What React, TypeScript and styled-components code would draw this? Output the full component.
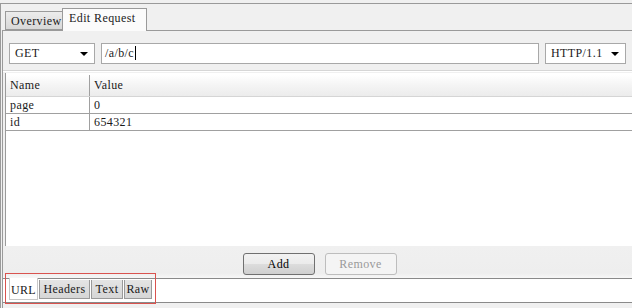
import React from 'react';
import styled, { createGlobalStyle } from 'styled-components';

const GlobalStyle = createGlobalStyle`
  html, body {
    margin: 0;
    padding: 0;
    background: #f0f0f0;
  }
  body {
    font-family: "Liberation Serif", "DejaVu Serif", serif;
    font-size: 12px;
    letter-spacing: 0.4px;
    color: #1a1a1a;
  }
`;

const Window = styled.div`
  position: relative;
  width: 632px;
  height: 308px;
  overflow: hidden;
  background: #f0f0f0;
  padding-top: 3px;
  box-sizing: border-box;
`;

const Frame = styled.div`
  border-top: 1px solid #9a9a9a;
  border-left: 1px solid #9a9a9a;
  height: 304px;
  display: flex;
  flex-direction: column;
  padding-left: 1px;
`;

const TabStrip = styled.div`
  display: flex;
  align-items: flex-end;
  height: 26px;
  padding-left: 3px;
`;

const TopTab = styled.div<{ $active?: boolean }>`
  display: flex;
  align-items: center;
  box-sizing: border-box;
  border: 1px solid #9a9a9a;
  border-bottom: ${({ $active }) => ($active ? 'none' : '1px solid #9a9a9a')};
  background: ${({ $active }) => ($active ? '#fbfbfb' : 'linear-gradient(#ececec, #d8d8d8)')};
  height: ${({ $active }) => ($active ? '23px' : '19px')};
  width: ${({ $active }) => ($active ? '85px' : '58px')};
  padding: ${({ $active }) => ($active ? '0 0 4px 6px' : '2px 0 0 5px')};
  margin-left: ${({ $active }) => ($active ? '-1px' : '0')};
  margin-bottom: ${({ $active }) => ($active ? '-1px' : '0')};
  position: relative;
  z-index: ${({ $active }) => ($active ? 1 : 0)};
`;

const Pane = styled.div`
  flex: 1;
  display: flex;
  flex-direction: column;
  border-top: 1px solid #9a9a9a;
  border-left: 1px solid #9a9a9a;
  background: #f0f0f0;
`;

const Toolbar = styled.div`
  display: flex;
  align-items: center;
  gap: 6px;
  padding: 11px 6px 0 6px;
  height: 22px;
`;

const Select = styled.div<{ $width: number }>`
  width: ${({ $width }) => $width}px;
  height: 21px;
  box-sizing: border-box;
  border: 1px solid #a8a8a8;
  background: #fff;
  display: flex;
  align-items: center;
  justify-content: space-between;
  padding: 0 6px 0 5px;
  flex-shrink: 0;
`;

const Arrow = styled.span`
  width: 0;
  height: 0;
  border-left: 4px solid transparent;
  border-right: 4px solid transparent;
  border-top: 4px solid #000;
  margin-top: 2px;
`;

const PathInput = styled.div`
  flex: 1;
  height: 21px;
  box-sizing: border-box;
  border: 1px solid #a8a8a8;
  background: #fff;
  display: flex;
  align-items: center;
  padding-left: 3px;
`;

const Caret = styled.span`
  display: inline-block;
  width: 1px;
  height: 14px;
  background: #000;
  margin-left: 1px;
`;

const Separator = styled.div`
  margin-top: 6px;
  border-top: 1px solid #d6d6d6;
  border-bottom: 1px solid #fff;
`;

const Grid = styled.div`
  flex: 1;
  margin: 1px 0 0 2px;
  border-left: 1px solid #9a9a9a;
  background: #fff;
  display: flex;
  flex-direction: column;
`;

const Row = styled.div<{ $header?: boolean }>`
  display: grid;
  grid-template-columns: 83px 1fr;
  height: ${({ $header }) => ($header ? '22px' : '17px')};
  box-sizing: border-box;
  border-bottom: 1px solid ${({ $header }) => ($header ? '#d5d5d5' : '#a0a0a0')};
  background: ${({ $header }) => ($header ? 'linear-gradient(#ffffff, #f4f4f4 50%, #ececec)' : '#fff')};
  margin-top: ${({ $header }) => ($header ? '2px' : '0')};
`;

const Cell = styled.div<{ $header?: boolean }>`
  display: flex;
  align-items: center;
  padding-left: 4px;
  & + & {
    border-left: 1px solid ${({ $header }) => ($header ? '#e2e2e2' : '#a0a0a0')};
  }
`;

const ButtonBar = styled.div`
  height: 32px;
  display: flex;
  justify-content: center;
  align-items: flex-start;
  gap: 10px;
  padding: 7px 0 0 4px;
  box-sizing: border-box;
  background: linear-gradient(#f0f0f0, #eeeeee 85%, #f7f7f7);
`;

const Button = styled.div<{ $disabled?: boolean }>`
  width: 72px;
  height: 22px;
  box-sizing: border-box;
  border: 1px solid ${({ $disabled }) => ($disabled ? '#bdbdbd' : '#707070')};
  border-radius: 3px;
  background: ${({ $disabled }) =>
    $disabled ? '#f4f4f4' : 'linear-gradient(#f2f2f2, #ebebeb 50%, #dddddd 51%, #cfcfcf)'};
  color: ${({ $disabled }) => ($disabled ? '#9a9a9a' : '#000')};
  display: flex;
  align-items: center;
  justify-content: center;
`;

const BottomPane = styled.div`
  border-top: 1px solid #8a8a8a;
  border-bottom: 1px solid #8a8a8a;
  background: #fff;
  height: 23px;
  display: flex;
  align-items: flex-start;
  padding-left: 6px;
  margin-bottom: 5px;
`;

const BottomTab = styled.div<{ $active?: boolean; $width: number }>`
  display: flex;
  align-items: center;
  justify-content: center;
  box-sizing: border-box;
  width: ${({ $width }) => $width}px;
  border: 1px solid ${({ $active }) => ($active ? '#c8c8c8' : '#9a9a9a')};
  border-top: none;
  background: ${({ $active }) => ($active ? '#ffffff' : 'linear-gradient(#e4e4e4, #d6d6d6)')};
  height: ${({ $active }) => ($active ? '22px' : '19px')};
  padding-top: ${({ $active }) => ($active ? '4px' : '0')};
  margin-top: ${({ $active }) => ($active ? '-1px' : '1px')};
  margin-right: 1px;
`;

const Highlight = styled.div`
  position: absolute;
  left: 5px;
  top: 273px;
  width: 151px;
  height: 31px;
  border: 1px solid #d9534f;
  box-sizing: border-box;
  pointer-events: none;
  z-index: 2;
`;

const params = [
  { name: 'page', value: '0' },
  { name: 'id', value: '654321' },
];

const bottomTabs = [
  { label: 'URL', width: 29 },
  { label: 'Headers', width: 51 },
  { label: 'Text', width: 32 },
  { label: 'Raw', width: 28 },
];

const App: React.FC = () => {
  return (
    <Window>
      <GlobalStyle />
      <Frame>
        <TabStrip>
          <TopTab>Overview</TopTab>
          <TopTab $active>Edit Request</TopTab>
        </TabStrip>
        <Pane>
          <Toolbar>
            <Select $width={86}>
              GET
              <Arrow />
            </Select>
            <PathInput>
              /a/b/c
              <Caret />
            </PathInput>
            <Select $width={81}>
              HTTP/1.1
              <Arrow />
            </Select>
          </Toolbar>
          <Separator />
          <Grid>
            <Row $header>
              <Cell $header>Name</Cell>
              <Cell $header>Value</Cell>
            </Row>
            {params.map((p) => (
              <Row key={p.name}>
                <Cell>{p.name}</Cell>
                <Cell>{p.value}</Cell>
              </Row>
            ))}
          </Grid>
          <ButtonBar>
            <Button>Add</Button>
            <Button $disabled>Remove</Button>
          </ButtonBar>
          <BottomPane>
            {bottomTabs.map((t, i) => (
              <BottomTab key={t.label} $active={i === 0} $width={t.width}>
                {t.label}
              </BottomTab>
            ))}
          </BottomPane>
        </Pane>
      </Frame>
      <Highlight />
    </Window>
  );
};

export default App;
